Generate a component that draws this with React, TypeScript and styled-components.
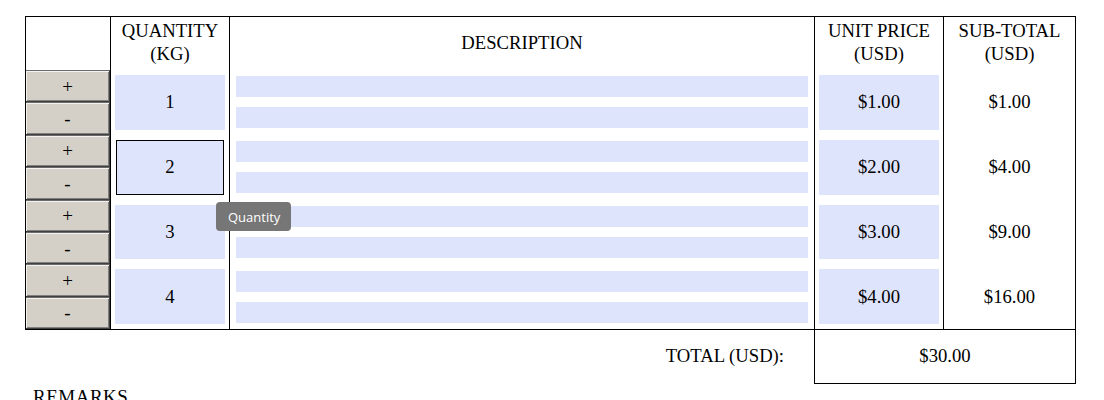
import React from "react";
import styled, { createGlobalStyle } from "styled-components";

interface Line {
  qty: number;
  price: number;
}

const lines: Line[] = [
  { qty: 1, price: 1 },
  { qty: 2, price: 2 },
  { qty: 3, price: 3 },
  { qty: 4, price: 4 },
];

const money = (n: number) => "$" + n.toFixed(2);

const GlobalStyle = createGlobalStyle`
  body {
    margin: 0;
    background: #fff;
    font-family: "Liberation Serif", "Times New Roman", serif;
    color: #000;
  }
`;

const App: React.FC = () => {
  const total = lines.reduce((sum, l) => sum + l.qty * l.price, 0);
  return (
    <Page>
      <GlobalStyle />
      <Table>
        <HeadCell />
        <HeadCell>
          QUANTITY
          <br />
          (KG)
        </HeadCell>
        <HeadCell>DESCRIPTION</HeadCell>
        <HeadCell>
          UNIT PRICE
          <br />
          (USD)
        </HeadCell>
        <HeadCell>
          SUB-TOTAL
          <br />
          (USD)
        </HeadCell>

        {lines.map((line, i) => (
          <React.Fragment key={line.qty}>
            <ButtonCell>
              <StepButton>+</StepButton>
              <StepButton>-</StepButton>
            </ButtonCell>
            <Cell>
              <Field $focused={i === 1}>{line.qty}</Field>
            </Cell>
            <DescCell>
              <DescBar />
              <DescBar />
            </DescCell>
            <Cell>
              <Field>{money(line.price)}</Field>
            </Cell>
            <Cell>
              <Plain>{money(line.qty * line.price)}</Plain>
            </Cell>
          </React.Fragment>
        ))}

        <Tooltip>Quantity</Tooltip>
      </Table>

      <TotalRow>
        <TotalLabel>TOTAL (USD):</TotalLabel>
        <TotalBox>{money(total)}</TotalBox>
      </TotalRow>

      <Remarks>REMARKS</Remarks>
    </Page>
  );
};

export default App;

const Page = styled.div`
  padding: 16px 0 0 25px;
`;

const Table = styled.div`
  position: relative;
  display: grid;
  grid-template-columns: 85px 119px 585px 129px 132px;
  grid-template-rows: 53px repeat(4, 64.75px);
  width: 1051px;
  box-sizing: border-box;
  border-top: 1px solid #000;
  border-right: 1px solid #000;
  border-bottom: 1px solid #000;
`;

const HeadCell = styled.div`
  display: flex;
  align-items: center;
  justify-content: center;
  text-align: center;
  box-sizing: border-box;
  border-left: 1px solid #000;
  font-size: 18.67px;
  line-height: 23px;
  padding-bottom: 3px;
`;

const Cell = styled.div`
  display: flex;
  align-items: center;
  justify-content: center;
  box-sizing: border-box;
  border-left: 1px solid #000;
  padding: 5px 4px 5px 4px;
`;

const ButtonCell = styled.div`
  display: flex;
  flex-direction: column;
  box-sizing: border-box;
  border-left: 1px solid #000;
`;

const StepButton = styled.button`
  flex: 1;
  margin: 0;
  padding: 0;
  background: #d4d0c8;
  border: none;
  border-right: 1px solid #404040;
  border-bottom: 1px solid #404040;
  border-top: 1px solid #6a6a6a;
  box-shadow: inset 1px 1px #f4f3ef, inset -1px -1px #808080;
  font-family: "Liberation Serif", "Times New Roman", serif;
  font-size: 19px;
  color: #000;
  line-height: 1;
`;

const Field = styled.div<{ $focused?: boolean }>`
  display: flex;
  align-items: center;
  justify-content: center;
  width: 100%;
  height: 100%;
  box-sizing: border-box;
  background: #dee4fc;
  border: 1px solid ${(p) => (p.$focused ? "#000" : "transparent")};
  margin: ${(p) => (p.$focused ? "0 1px" : "0")};
  font-size: 18.67px;
`;

const Plain = styled.span`
  font-size: 18.67px;
`;

const DescCell = styled.div`
  display: flex;
  flex-direction: column;
  justify-content: center;
  gap: 10px;
  box-sizing: border-box;
  border-left: 1px solid #000;
  padding: 0 6px 0 6px;
`;

const DescBar = styled.div`
  height: 21px;
  background: #dee4fc;
`;

const Tooltip = styled.div`
  position: absolute;
  left: 191px;
  top: 185px;
  padding: 0 11px 0 12px;
  height: 29px;
  display: flex;
  align-items: center;
  background: #767676;
  border-radius: 4px;
  color: #fff;
  font-family: "Open Sans", "DejaVu Sans", sans-serif;
  font-size: 13px;
`;

const TotalRow = styled.div`
  display: flex;
  width: 1051px;
`;

const TotalLabel = styled.div`
  width: 789px;
  box-sizing: border-box;
  padding-right: 30px;
  display: flex;
  align-items: center;
  justify-content: flex-end;
  font-size: 18.67px;
  padding-bottom: 2px;
`;

const TotalBox = styled.div`
  width: 262px;
  height: 54px;
  box-sizing: border-box;
  border-left: 1px solid #000;
  border-right: 1px solid #000;
  border-bottom: 1px solid #000;
  display: flex;
  align-items: center;
  justify-content: center;
  font-size: 18.67px;
  padding-bottom: 2px;
`;

const Remarks = styled.div`
  padding: 2px 0 0 8px;
  font-size: 19px;
  letter-spacing: 0.5px;
`;
